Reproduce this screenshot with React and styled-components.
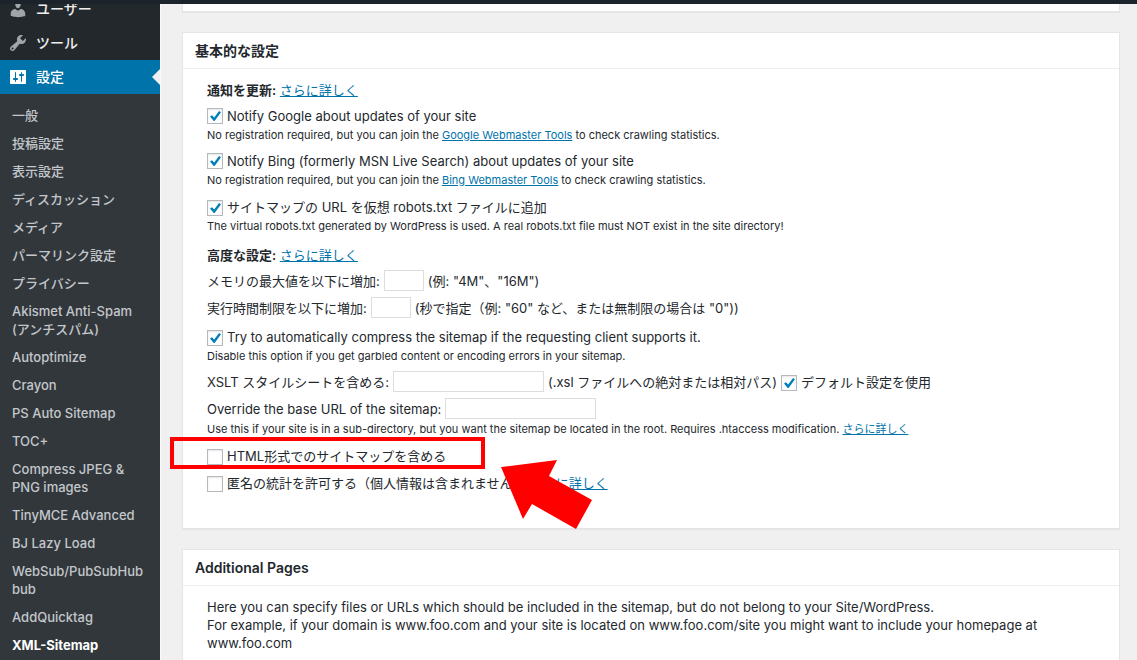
import styled, { createGlobalStyle } from "styled-components";

const GlobalStyle = createGlobalStyle`
  *,
  *::before,
  *::after {
    box-sizing: border-box;
  }

  body {
    margin: 0;
    background-color: #f0f0f0;
    color: #23282d;
    font-family: Inter, "Noto Sans CJK JP", sans-serif;
    font-size: 13px;
    line-height: 18px;
  }

  ul {
    margin: 0;
    padding: 0;
    list-style: none;
  }

  h2,
  p {
    margin: 0;
  }
`;

const Page = styled.div`
  display: flex;
  flex-direction: column;
  height: 100vh;
  overflow: hidden;
`;

const AdminBar = styled.header`
  flex: none;
  height: 4px;
  background-color: #1d232b;
`;

const Columns = styled.div`
  display: flex;
  flex: 1;
  min-height: 0;
`;

// /////////////////////////////

const Sidebar = styled.nav`
  flex: none;
  width: 160px;
  overflow: hidden;
  background-color: #32373c;
`;

const Menu = styled.ul`
  margin-top: -12px;
`;

const MenuLink = styled.a`
  position: relative;
  display: flex;
  align-items: center;
  height: 34px;
  padding: 0 8px 1px;
  gap: 8px;
  background-color: ${({ $current }) => ($current ? "#0073aa" : "#23282d")};
  color: ${({ $current }) => ($current ? "#ffffff" : "#eeeeee")};
  font-size: 14px;
  font-weight: 500;
  text-decoration: none;

  &::after {
    content: "";
    display: ${({ $current }) => ($current ? "block" : "none")};
    position: absolute;
    right: 0;
    border: 8px solid transparent;
    border-right-color: #f0f0f0;
  }
`;

const MenuIcon = styled.svg`
  width: 20px;
  height: 20px;
  fill: ${({ $current }) => ($current ? "#ffffff" : "#a0a5aa")};
`;

const SubMenu = styled.ul`
  padding: 7px 0;
`;

const SubLink = styled.a`
  display: block;
  padding: 5px 12px;
  color: ${({ $current }) => ($current ? "#ffffff" : "#c3c7cb")};
  font-weight: ${({ $current }) => ($current ? 700 : 500)};
  text-decoration: none;
  overflow-wrap: anywhere;
`;

// /////////////////////////////

const Content = styled.main`
  flex: 1;
  min-width: 0;
  padding: 0 17px 0 21px;
  border-left: 1px solid #fafafa;
  overflow: hidden;
`;

const Box = styled.section`
  margin-bottom: 20px;
  border: 1px solid #e5e5e5;
  background-color: #ffffff;
  box-shadow: 0 1px 1px rgba(0, 0, 0, 0.04);
`;

const PreviousBox = styled(Box)`
  height: 8px;
  border-top: 0;
`;

const BoxTitle = styled.h2`
  padding: 9px 12px 8px;
  border-bottom: 1px solid #eeeeee;
  color: #23282d;
  font-size: 14px;
  font-weight: 600;
`;

const BoxBody = styled.div`
  padding: 12px 24px 36px;
`;

const Group = styled.ul`
  display: flex;
  flex-direction: column;
  gap: ${({ $gap }) => $gap}px;
  margin-top: ${({ $top }) => $top}px;
`;

const Item = styled.li`
  position: relative;
`;

const GroupTitle = styled.p`
  margin-top: ${({ $top }) => $top || 0}px;

  b {
    font-weight: 600;
  }
`;

const Link = styled.a`
  color: #0073aa;
  text-decoration: underline;
`;

const Row = styled.div`
  display: flex;
  align-items: center;
  gap: 4px;
  white-space: nowrap;
`;

const Note = styled.p`
  margin-top: 1px;
  font-size: 11px;
`;

const CheckInput = styled.input.attrs({ type: "checkbox" })`
  appearance: none;
  flex: none;
  width: 16px;
  height: 16px;
  margin: ${({ $low }) => ($low ? "3px 0 0" : "0")};
  padding: 2px;
  border: 1px solid #b4b9be;
  background-color: #ffffff;
  box-shadow: inset 0 1px 2px rgba(0, 0, 0, 0.1);

  &:checked::before {
    content: "";
    display: block;
    width: 11px;
    height: 10px;
    background-color: #0080b8;
    clip-path: polygon(0 54%, 18% 42%, 38% 66%, 82% 0, 100% 12%, 42% 100%, 34% 100%);
  }
`;

const TextInput = styled.input.attrs({ type: "text" })`
  width: ${({ $wide }) => ($wide ? 151 : 40)}px;
  height: 21px;
  margin: 0;
  padding: 3px 5px;
  border: 1px solid #dddddd;
  background-color: #ffffff;
  font: inherit;
`;

const Highlight = styled.span`
  position: absolute;
  z-index: 1;
  top: -9px;
  left: -37px;
  width: 315px;
  height: 32px;
  border: 4px solid #ff0000;
  pointer-events: none;
`;

const Arrow = styled.svg`
  position: absolute;
  z-index: 1;
  top: 14px;
  left: 294px;
  width: 91px;
  height: 69px;
  fill: #ff0000;
  pointer-events: none;
`;

const Description = styled.p`
  padding: 12px 24px;
`;

// /////////////////////////////

const icons = {
  users:
    "M10 9.25c-2.27 0-2.73-3.44-2.73-3.44C7 4.02 7.82 2 9.97 2c2.16 0 2.98 2.02 2.71 3.81 0 0-.41 3.44-2.68 3.44zm0 2.57L12.72 10c2.39 0 4.52 2.33 4.52 4.53v2.49s-3.65 1.13-7.24 1.13c-3.65 0-7.24-1.13-7.24-1.13v-2.49c0-2.25 1.94-4.48 4.47-4.48z",
  tools:
    "M16.68 9.77c-1.34 1.34-3.3 1.67-4.95.99l-5.41 6.52c-.99.99-2.59.99-3.58 0s-.99-2.59 0-3.57l6.52-5.42c-.68-1.65-.35-3.61.99-4.95 1.28-1.28 3.12-1.62 4.72-1.06l-2.89 2.89 2.82 2.82 2.86-2.87c.53 1.58.18 3.39-1.08 4.65zM3.81 16.21c.4.39 1.04.39 1.43 0 .4-.4.4-1.04 0-1.43-.39-.4-1.03-.4-1.43 0-.39.39-.39 1.03 0 1.43z",
  settings:
    "M18 16V4c0-.55-.45-1-1-1H3c-.55 0-1 .45-1 1v12c0 .55.45 1 1 1h14c.55 0 1-.45 1-1zM8 11h1c.55 0 1 .45 1 1s-.45 1-1 1H8v1.5c0 .28-.22.5-.5.5s-.5-.22-.5-.5V13H6c-.55 0-1-.45-1-1s.45-1 1-1h1V5.5c0-.28.22-.5.5-.5s.5.22.5.5V11zm5-2h-1c-.55 0-1-.45-1-1s.45-1 1-1h1V5.5c0-.28.22-.5.5-.5s.5.22.5.5V7h1c.55 0 1 .45 1 1s-.45 1-1 1h-1v5.5c0 .28-.22.5-.5.5s-.5-.22-.5-.5V9z",
};

const menu = [
  { label: "ユーザー", icon: "users" },
  { label: "ツール", icon: "tools" },
  { label: "設定", icon: "settings", current: true },
];

const subMenu = [
  "一般",
  "投稿設定",
  "表示設定",
  "ディスカッション",
  "メディア",
  "パーマリンク設定",
  "プライバシー",
  "Akismet Anti-Spam (アンチスパム)",
  "Autoptimize",
  "Crayon",
  "PS Auto Sitemap",
  "TOC+",
  "Compress JPEG & PNG images",
  "TinyMCE Advanced",
  "BJ Lazy Load",
  "WebSub/PubSubHubbub",
  "AddQuicktag",
  "XML-Sitemap",
];

const Check = ({ id, label, checked, low, children }) => (
  <Row>
    <CheckInput id={id} defaultChecked={checked} $low={low} />
    <label htmlFor={id}>{label}</label>
    {children}
  </Row>
);

const Field = ({ id, label, wide, children }) => (
  <Row>
    <label htmlFor={id}>{label}</label>
    <TextInput id={id} $wide={wide} />
    {children}
  </Row>
);

export default function App() {
  return (
    <Page>
      <GlobalStyle />
      <AdminBar />
      <Columns>
        <Sidebar>
          <Menu>
            {menu.map(({ label, icon, current }) => (
              <li key={label}>
                <MenuLink href="#" $current={current}>
                  <MenuIcon viewBox="0 0 20 20" $current={current}>
                    <path d={icons[icon]} />
                  </MenuIcon>
                  {label}
                </MenuLink>
              </li>
            ))}
          </Menu>
          <SubMenu>
            {subMenu.map((label) => (
              <li key={label}>
                <SubLink href="#" $current={label === "XML-Sitemap"}>
                  {label}
                </SubLink>
              </li>
            ))}
          </SubMenu>
        </Sidebar>

        <Content>
          <PreviousBox />

          <Box>
            <BoxTitle>基本的な設定</BoxTitle>
            <BoxBody>
              <GroupTitle>
                <b>通知を更新:</b> <Link href="#">さらに詳しく</Link>
              </GroupTitle>
              <Group $top={8} $gap={8}>
                <Item>
                  <Check id="google" label="Notify Google about updates of your site" checked />
                  <Note>
                    No registration required, but you can join the{" "}
                    <Link href="#">Google Webmaster Tools</Link> to check crawling statistics.
                  </Note>
                </Item>
                <Item>
                  <Check
                    id="bing"
                    label="Notify Bing (formerly MSN Live Search) about updates of your site"
                    checked
                  />
                  <Note>
                    No registration required, but you can join the{" "}
                    <Link href="#">Bing Webmaster Tools</Link> to check crawling statistics.
                  </Note>
                </Item>
                <Item>
                  <Check
                    id="robots"
                    label="サイトマップの URL を仮想 robots.txt ファイルに追加"
                    checked
                    low
                  />
                  <Note>
                    The virtual robots.txt generated by WordPress is used. A real robots.txt file
                    must NOT exist in the site directory!
                  </Note>
                </Item>
              </Group>

              <GroupTitle $top={11}>
                <b>高度な設定:</b> <Link href="#">さらに詳しく</Link>
              </GroupTitle>
              <Group $top={6} $gap={6}>
                <Item>
                  <Field id="memory" label="メモリの最大値を以下に増加:">
                    <span>(例: "4M"、"16M")</span>
                  </Field>
                </Item>
                <Item>
                  <Field id="time" label="実行時間制限を以下に増加:">
                    <span>(秒で指定（例: "60" など、または無制限の場合は "0"))</span>
                  </Field>
                </Item>
              </Group>
              <Group $top={9} $gap={6}>
                <Item>
                  <Check
                    id="compress"
                    label="Try to automatically compress the sitemap if the requesting client supports it."
                    checked
                    low
                  />
                  <Note>
                    Disable this option if you get garbled content or encoding errors in your
                    sitemap.
                  </Note>
                </Item>
                <Item>
                  <Field id="xslt" label="XSLT スタイルシートを含める:" wide>
                    <span>(.xsl ファイルへの絶対または相対パス)</span>
                    <Check id="xslt-default" label="デフォルト設定を使用" checked low />
                  </Field>
                </Item>
                <Item>
                  <Field id="base-url" label="Override the base URL of the sitemap:" wide />
                  <Note>
                    Use this if your site is in a sub-directory, but you want the sitemap be located
                    in the root. Requires .htaccess modification.{" "}
                    <Link href="#">さらに詳しく</Link>
                  </Note>
                </Item>
              </Group>
              <Group $top={8} $gap={8}>
                <Item>
                  <Check id="html" label="HTML形式でのサイトマップを含める" low />
                  <Highlight />
                  <Arrow viewBox="0 0 91 69">
                    <path d="M0 7 56 0 48 16 91 40 75 69 31 44 22 59z" />
                  </Arrow>
                </Item>
                <Item>
                  <Check
                    id="stats"
                    label="匿名の統計を許可する（個人情報は含まれません）"
                    low
                  >
                    <Link href="#">さらに詳しく</Link>
                  </Check>
                </Item>
              </Group>
            </BoxBody>
          </Box>

          <Box>
            <BoxTitle>Additional Pages</BoxTitle>
            <Description>
              Here you can specify files or URLs which should be included in the sitemap, but do not
              belong to your Site/WordPress.
              <br />
              For example, if your domain is www.foo.com and your site is located on www.foo.com/site
              you might want to include your homepage at www.foo.com
            </Description>
          </Box>
        </Content>
      </Columns>
    </Page>
  );
}
